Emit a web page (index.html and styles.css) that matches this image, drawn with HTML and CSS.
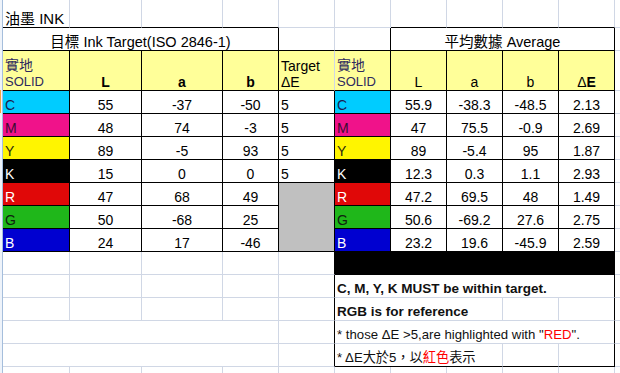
FILE: index.html
```html
<!DOCTYPE html>
<html lang="zh-Hant">
<head>
<meta charset="utf-8">
<title>油墨 INK</title>
<link rel="stylesheet" href="styles.css">
</head>
<body>
<div class="sheet">
  <div class="edge"></div>
  <table class="grid">
    <colgroup>
      <col class="ca"><col class="cb"><col class="cc"><col class="cn" span="8">
    </colgroup>
    <tbody>
      <tr class="h28">
        <td class="bb big">油墨 INK</td><td class="bb"></td><td class="bb"></td><td class="bb"></td>
        <td></td><td></td>
        <td class="bb"></td><td class="bb"></td><td class="bb"></td><td class="bb"></td><td></td>
      </tr>
      <tr class="h23">
        <td colspan="4" class="ctr title br bb">目標 Ink Target(ISO 2846-1)</td>
        <td class="bb"></td><td class="br bb"></td>
        <td colspan="4" class="ctr title br bb">平均數據 Average</td><td></td>
      </tr>
      <tr class="h40 hdr">
        <td class="br bb two lbl">實地<br><span class="solid">SOLID</span></td>
        <td class="br bb ctr"><b>L</b></td>
        <td class="br bb ctr"><b>a</b></td>
        <td class="br bb ctr"><b>b</b></td>
        <td class="bb two">Target<br>ΔE</td>
        <td class="br bb two lbl">實地<br><span class="solid">SOLID</span></td>
        <td class="br bb ctr">L</td>
        <td class="br bb ctr">a</td>
        <td class="br bb ctr">b</td>
        <td class="br bb ctr">Δ<b>E</b></td>
        <td class="plain"></td>
      </tr>
      <tr class="h23">
        <td class="br bb cyan">C</td><td class="br bb ctr">55</td><td class="br bb ctr">-37</td><td class="br bb ctr">-50</td>
        <td class="br bb">5</td>
        <td class="br bb cyan">C</td><td class="br bb ctr">55.9</td><td class="br bb ctr">-38.3</td><td class="br bb ctr">-48.5</td><td class="br bb ctr">2.13</td><td></td>
      </tr>
      <tr class="h23">
        <td class="br bb mag">M</td><td class="br bb ctr">48</td><td class="br bb ctr">74</td><td class="br bb ctr">-3</td>
        <td class="br bb">5</td>
        <td class="br bb mag">M</td><td class="br bb ctr">47</td><td class="br bb ctr">75.5</td><td class="br bb ctr">-0.9</td><td class="br bb ctr">2.69</td><td></td>
      </tr>
      <tr class="h23">
        <td class="br bb yel">Y</td><td class="br bb ctr">89</td><td class="br bb ctr">-5</td><td class="br bb ctr">93</td>
        <td class="br bb">5</td>
        <td class="br bb yel">Y</td><td class="br bb ctr">89</td><td class="br bb ctr">-5.4</td><td class="br bb ctr">95</td><td class="br bb ctr">1.87</td><td></td>
      </tr>
      <tr class="h23">
        <td class="br bb blk">K</td><td class="br bb ctr">15</td><td class="br bb ctr">0</td><td class="br bb ctr">0</td>
        <td class="br bb">5</td>
        <td class="br bb blk">K</td><td class="br bb ctr">12.3</td><td class="br bb ctr">0.3</td><td class="br bb ctr">1.1</td><td class="br bb ctr">2.93</td><td></td>
      </tr>
      <tr class="h23">
        <td class="br bb red">R</td><td class="br bb ctr">47</td><td class="br bb ctr">68</td><td class="br bb ctr">49</td>
        <td rowspan="3" class="br bb gray"></td>
        <td class="br bb red">R</td><td class="br bb ctr">47.2</td><td class="br bb ctr">69.5</td><td class="br bb ctr">48</td><td class="br bb ctr">1.49</td><td></td>
      </tr>
      <tr class="h23">
        <td class="br bb grn">G</td><td class="br bb ctr">50</td><td class="br bb ctr">-68</td><td class="br bb ctr">25</td>
        <td class="br bb grn">G</td><td class="br bb ctr">50.6</td><td class="br bb ctr">-69.2</td><td class="br bb ctr">27.6</td><td class="br bb ctr">2.75</td><td></td>
      </tr>
      <tr class="h23">
        <td class="br bb blu">B</td><td class="br bb ctr">24</td><td class="br bb ctr">17</td><td class="br bb ctr">-46</td>
        <td class="br bb blu">B</td><td class="br bb ctr">23.2</td><td class="br bb ctr">19.6</td><td class="br bb ctr">-45.9</td><td class="br bb ctr">2.59</td><td></td>
      </tr>
      <tr class="h23">
        <td></td><td></td><td></td><td></td>
        <td class="br"></td>
        <td colspan="5" class="br bb blk"></td><td></td>
      </tr>
      <tr class="h23">
        <td></td><td></td><td></td><td></td>
        <td class="br"></td>
        <td colspan="5" class="br note"><b>C, M, Y, K MUST be within target.</b></td><td></td>
      </tr>
      <tr class="h23">
        <td></td><td></td><td></td><td></td>
        <td class="br"></td>
        <td colspan="3" class="note"><b>RGB is for reference</b></td><td></td><td class="br"></td><td></td>
      </tr>
      <tr class="h23">
        <td colspan="4"></td>
        <td class="br"></td>
        <td colspan="5" class="br note">* those ΔE &gt;5,are highlighted with "<span class="hl">RED</span>".</td><td></td>
      </tr>
      <tr class="h23">
        <td colspan="4"></td>
        <td class="br"></td>
        <td colspan="3" class="bb note">* ΔE大於5，以<span class="hl">紅色</span>表示</td><td class="bb"></td><td class="br bb"></td><td></td>
      </tr>
      <tr class="h23">
        <td></td><td></td><td></td><td></td><td></td><td></td><td></td><td></td><td></td><td></td><td></td>
      </tr>
    </tbody>
  </table>
</div>
</body>
</html>
```

FILE: styles.css
```css
html, body {
  margin: 0;
  padding: 0;
  background: #ffffff;
  overflow: hidden;
}

body {
  font-family: "Liberation Sans", "Noto Sans CJK TC", sans-serif;
  font-size: 14px;
  color: #000000;
}

.sheet {
  display: flex;
  align-items: flex-start;
  width: 620px;
  height: 373px;
  overflow: hidden;
}

.edge {
  flex: none;
  width: 2px;
  height: 373px;
  background: #eef3fa;
  border-right: 1px solid #a5bedc;
  position: relative;
}

.edge::before {
  content: "";
  position: absolute;
  left: 0;
  top: 90px;
  width: 1px;
  height: 23px;
  background: #f5a340;
}

.grid {
  flex: none;
  width: 668px;
  border-collapse: separate;
  border-spacing: 0;
  table-layout: fixed;
}

.ca { width: 67px; }
.cb { width: 72px; }
.cc { width: 81px; }
.cn { width: 56px; }

.grid td {
  box-sizing: border-box;
  border: 0;
  border-right: 1px solid #d0d7e5;
  border-bottom: 1px solid #d0d7e5;
  padding: 0 2px;
  vertical-align: bottom;
  line-height: 16px;
  white-space: nowrap;
  overflow: visible;
}

.h28 { height: 28px; }
.h23 { height: 23px; }
.h40 { height: 40px; }

.grid td.br { border-right-color: #000000; }
.grid td.bb { border-bottom-color: #000000; }

.ctr { text-align: center; }

.big { font-size: 15px; }
.title { font-size: 14.5px; }

.hdr td { background: #ffff99; }
.hdr td.plain { background: #ffffff; }

.two { line-height: 17px; }
.lbl { color: #2e2a5e; }
.solid { font-size: 13px; }

.cyan { background: #00ccff; color: #1c1c50; }
.mag  { background: #f0128a; color: #3a0c30; }
.yel  { background: #fff500; color: #2a2a10; }
.blk  { background: #000000; color: #ffffff; }
.red  { background: #e00808; color: #ffffff; }
.grn  { background: #1fb71a; color: #102010; }
.blu  { background: #0000d0; color: #ffffff; }
.gray { background: #c0c0c0; }

.note { padding-left: 1px; color: #111111; font-size: 13.2px; }
.note b { font-size: 13.5px; }
.hl { color: #ff0000; }
```
